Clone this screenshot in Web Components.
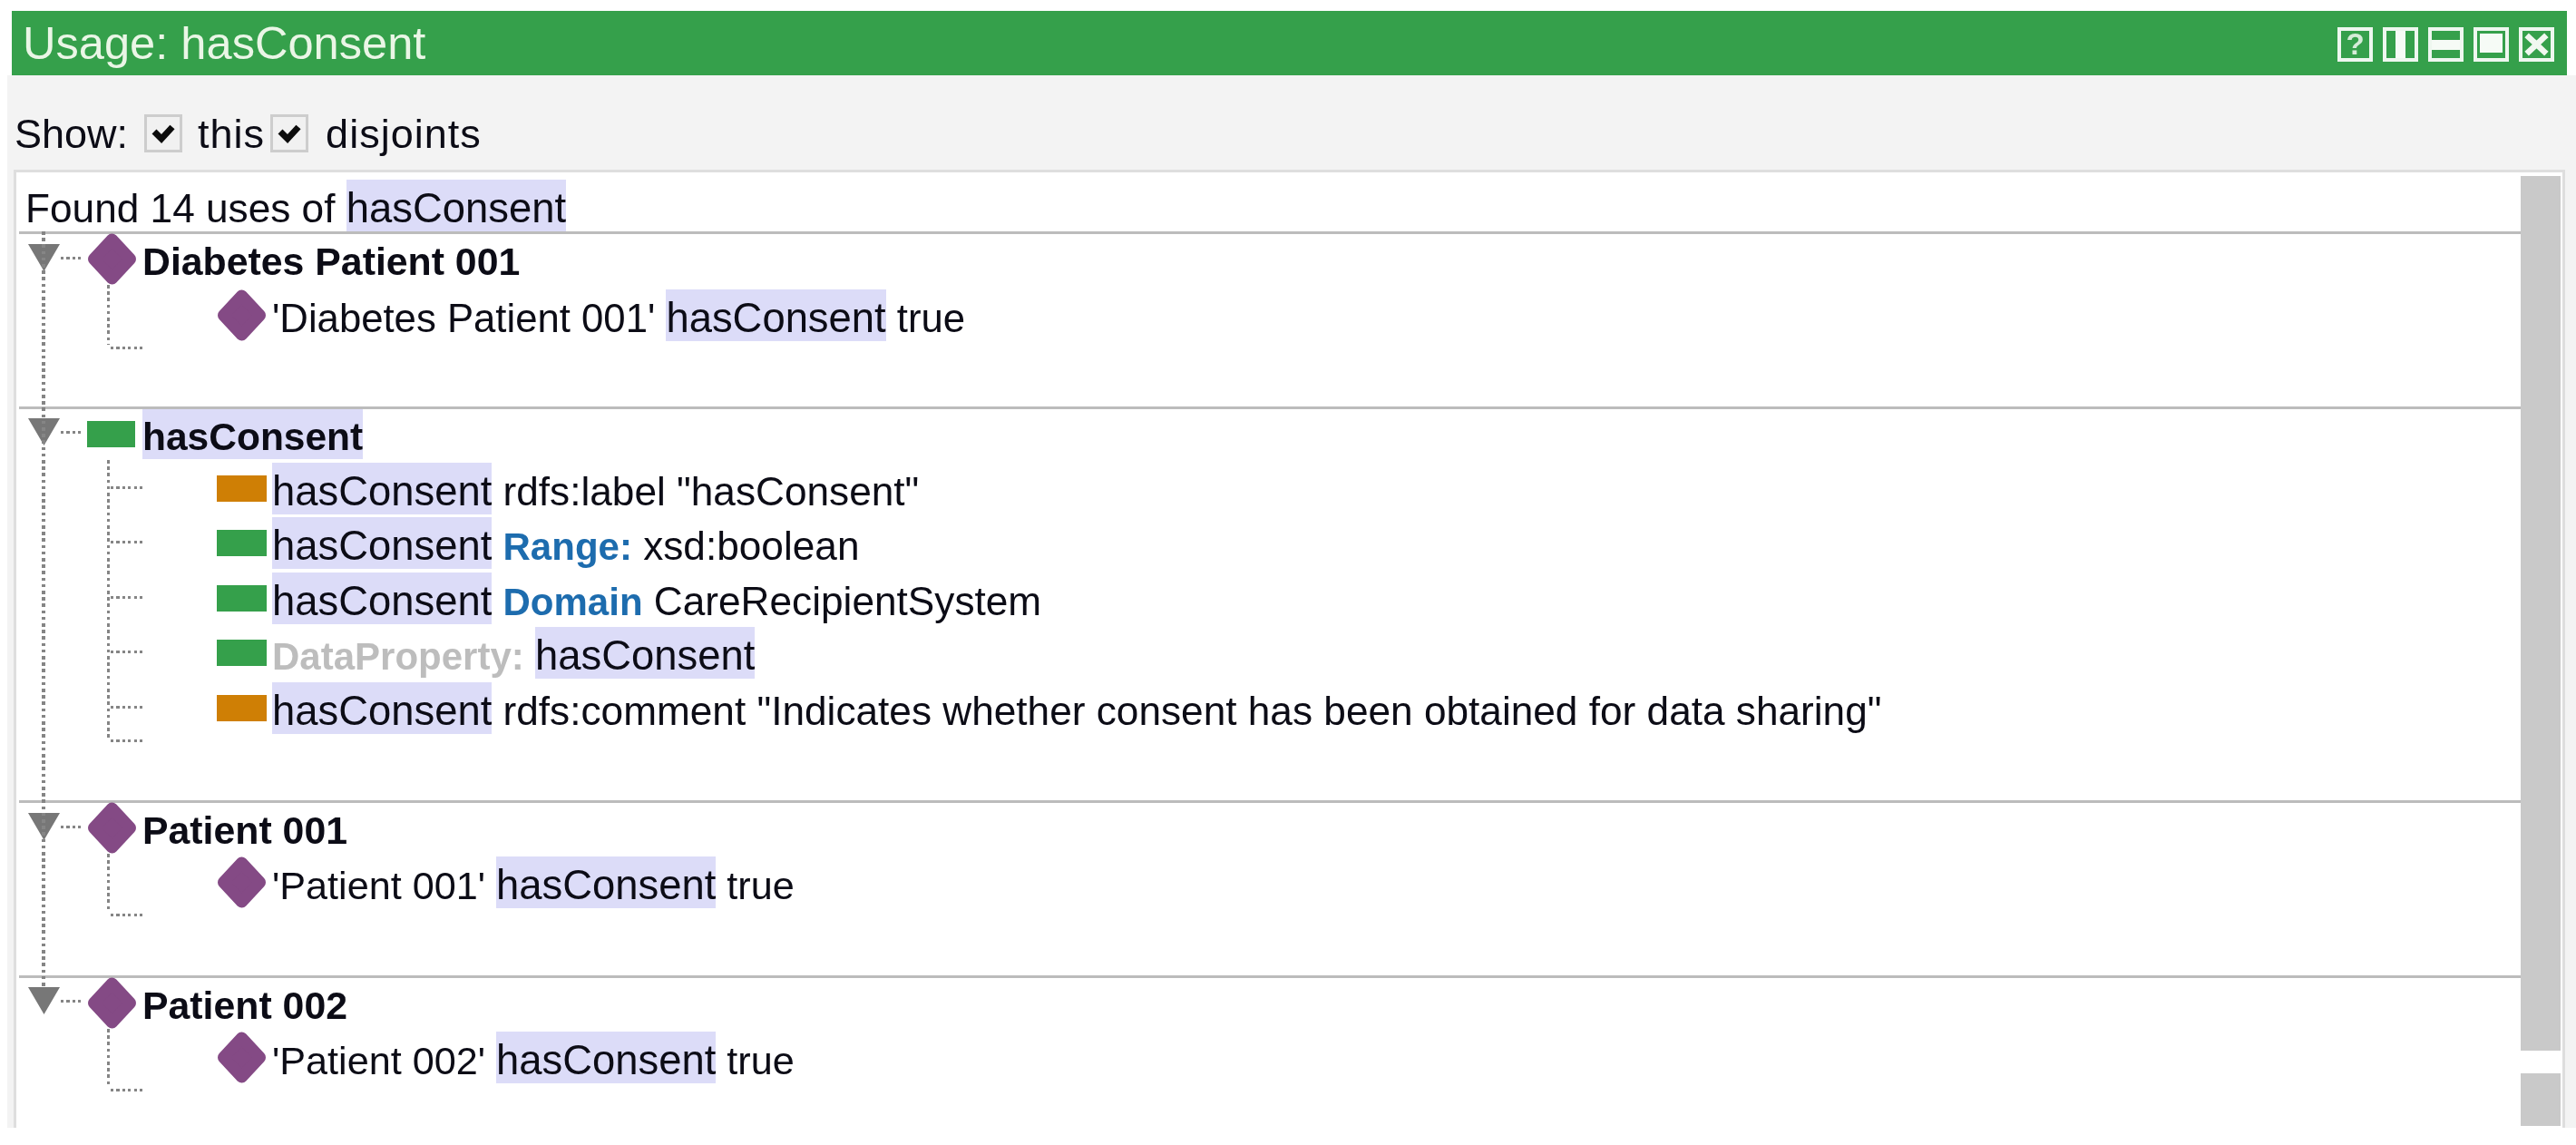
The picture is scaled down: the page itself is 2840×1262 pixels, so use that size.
<!DOCTYPE html>
<html lang="en">
<head>
<meta charset="utf-8">
<title>Usage: hasConsent</title>
<style>
  html, body { margin: 0; padding: 0; background: #fff; }
  body { font-family: "Liberation Sans", Arial, sans-serif; color: #0c0c16; overflow: hidden; }
</style>
</head>
<body>
<usage-view>
  <usage-bar slot="bar" label="Usage: hasConsent">
    <view-button kind="help"></view-button>
    <view-button kind="columns"></view-button>
    <view-button kind="rows"></view-button>
    <view-button kind="max"></view-button>
    <view-button kind="close"></view-button>
  </usage-bar>
  <show-bar slot="show">
    <span>Show:</span>
    <check-box label="this" style="--gap:17px;margin-left:18px"></check-box>
    <check-box label="disjoints" style="--gap:19px;margin-left:6px"></check-box>
  </show-bar>
  <usage-panel slot="panel">
    <found-line>Found 14 uses of <hl-term>hasConsent</hl-term></found-line>

    <usage-group icon="individual" name="Diabetes Patient 001" style="--pt:6px;--pb:71.5px">
      <usage-row icon="individual" style="font-size:43.7px">'Diabetes Patient 001' <hl-term>hasConsent</hl-term> true</usage-row>
    </usage-group>

    <usage-group icon="data" name="hasConsent" mark>
      <usage-row branch icon="annotation"><hl-term>hasConsent</hl-term> rdfs:label "hasConsent"</usage-row>
      <usage-row branch icon="data"><hl-term>hasConsent</hl-term> <key-word>Range:</key-word> xsd:boolean</usage-row>
      <usage-row branch icon="data"><hl-term>hasConsent</hl-term> <key-word>Domain</key-word> CareRecipientSystem</usage-row>
      <usage-row branch icon="data"><key-word tone="grey">DataProperty:</key-word> <hl-term>hasConsent</hl-term></usage-row>
      <usage-row branch icon="annotation"><hl-term>hasConsent</hl-term> rdfs:comment "Indicates whether consent has been obtained for data sharing"</usage-row>
    </usage-group>

    <usage-group icon="individual" name="Patient 001">
      <usage-row icon="individual" style="font-size:43.2px">'Patient 001' <hl-term>hasConsent</hl-term> true</usage-row>
    </usage-group>

    <usage-group icon="individual" name="Patient 002">
      <usage-row icon="individual" style="font-size:43.2px">'Patient 002' <hl-term>hasConsent</hl-term> true</usage-row>
    </usage-group>
  </usage-panel>
</usage-view>

<script>
const DOTS_V = 'repeating-linear-gradient(to bottom,#858585 0 3.6px,transparent 3.6px 7.2px)';
const DOTS_H = 'repeating-linear-gradient(to right,#858585 0 3.2px,transparent 3.2px 6.4px)';
const base = ':host{filter:blur(.5px)}';

function iconMarkup(kind, header) {
  if (kind === 'individual') {
    return `<svg width="55" height="57" viewBox="0 0 55 57" aria-hidden="true"><polygon points="27.5,7 47.5,28.5 27.5,50 7.5,28.5" fill="#844a85" stroke="#844a85" stroke-width="13" stroke-linejoin="round"/></svg>`;
  }
  const colour = kind === 'annotation' ? '#cf7f05' : '#35a04b';
  return `<svg width="55" height="29" viewBox="0 0 55 29" aria-hidden="true"><rect width="${header ? 53 : 55}" height="29" fill="${colour}"/></svg>`;
}

class Simple extends HTMLElement {
  connectedCallback() {
    if (this.shadowRoot) return;
    this.attachShadow({mode: 'open'}).innerHTML = this.render();
  }
}

customElements.define('usage-view', class extends Simple {
  render() { return `<style>
    :host{display:flex;flex-direction:column;width:2840px;height:1262px;padding-top:12px;box-sizing:border-box;font:44.2px/1 "Liberation Sans",Arial,sans-serif}
    .bar{display:block;margin:0 10px 0 13px}
    .body{display:flex;flex-direction:column;margin-left:8px;height:1160px;background:#f3f3f3}
  </style>
  <div class="bar"><slot name="bar"></slot></div>
  <div class="body"><slot name="show"></slot><slot name="panel"></slot></div>`; }
});

customElements.define('usage-bar', class extends Simple {
  render() { return `<style>
    :host{display:flex;align-items:center;justify-content:space-between;height:71px;background:#35a04b;color:#eaf6e6;padding:0 14px 0 12px;box-sizing:border-box;filter:blur(.4px)}
    .t{font-size:50.6px;line-height:71px;white-space:nowrap}
    .b{display:flex;gap:11px;margin-top:3px}
  </style><span class="t">${this.getAttribute('label')}</span><div class="b"><slot></slot></div>`; }
});

customElements.define('view-button', class extends Simple {
  render() {
    const k = this.getAttribute('kind');
    const inner = {
      help: '<span class="q">?</span>',
      columns: '<i style="left:10px;top:0;width:11px;height:100%"></i>',
      rows: '<i style="left:0;top:10px;width:100%;height:11px"></i>',
      max: '<i style="left:3px;top:3px;width:25px;height:21px"></i>',
      close: '<svg width="31" height="30" viewBox="0 0 31 30" aria-hidden="true"><path d="M7 7 L24 23 M24 7 L7 23" stroke="#f1f8f0" stroke-width="6.5" stroke-linecap="square" fill="none"/></svg>'
    }[k];
    return `<style>
      :host{display:block;width:39px;height:38px}
      .box{position:relative;box-sizing:border-box;width:100%;height:100%;border:4px solid #eef7ef;overflow:hidden}
      i{position:absolute;background:#f6fbf6;display:block}
      .q{display:block;text-align:center;font:bold 33px/30px "Liberation Sans",Arial,sans-serif;color:#d5ecd8}
      svg{display:block;position:absolute;left:0;top:0}
    </style><div class="box">${inner}</div>`;
  }
});

customElements.define('show-bar', class extends Simple {
  render() { return `<style>
    :host{display:flex;align-items:center;height:104px;padding:24px 0 0 8px;box-sizing:border-box;font-size:45px;color:#0c0c16;filter:blur(.5px);flex:none}
  </style><slot></slot>`; }
});

customElements.define('check-box', class extends Simple {
  render() { return `<style>
    :host{display:inline-flex;align-items:center;gap:var(--gap,18px)}
    .b{width:42px;height:42px;box-sizing:border-box;border:3px solid #cdcdcd;background:#f1f1f1;display:block;flex:none}
    svg{display:block}
    .l{letter-spacing:1px}
  </style><span class="b"><svg width="36" height="36" viewBox="0 0 36 36" aria-hidden="true"><path d="M8 16 L16 24 L28 11" fill="none" stroke="#0c0c0c" stroke-width="7" stroke-linejoin="miter"/></svg></span><span class="l">${this.getAttribute('label')}</span>`; }
});

customElements.define('usage-panel', class extends Simple {
  render() { return `<style>
    :host{display:flex;flex:1;min-height:0;margin:0 12px 0 7px;background:#fff;border:solid #dedede;border-width:3px 3px 0 3px;overflow:hidden}
    .list{position:relative;flex:1;min-width:0;padding-left:3px;display:flex;flex-direction:column;overflow:hidden}
    .trunk{position:absolute;left:28px;top:65px;width:4px;height:835px;background:${DOTS_V};z-index:2;filter:blur(.4px)}
    .sb{display:flex;flex-direction:column;gap:25px;width:44px;padding:4px 2px 0 0;filter:blur(.4px)}
    .sb i{display:block;background:#c9c9c9;flex:none}
  </style>
  <div class="list"><slot></slot><div class="trunk"></div></div>
  <div class="sb"><i style="height:964px"></i><i style="height:58px"></i></div>`; }
});

customElements.define('found-line', class extends Simple {
  render() { return `<style>
    ${base}
    :host{display:block;flex:none;height:65px;padding:8px 0 0 7px;line-height:57px;white-space:pre;box-sizing:border-box}
  </style><slot></slot>`; }
});

customElements.define('hl-term', class extends Simple {
  render() { return `<style>
    :host{display:inline-block;box-sizing:border-box;height:57px;padding-top:3px;line-height:57px;background:#dcdcf8;font-size:45.4px;vertical-align:baseline}
  </style><slot></slot>`; }
});

customElements.define('key-word', class extends Simple {
  render() {
    const c = this.getAttribute('tone') === 'grey' ? '#bdbdbd' : '#1d6cae';
    return `<style>:host{display:inline;font-weight:bold;font-size:42px;color:${c}}</style><slot></slot>`;
  }
});

customElements.define('usage-group', class extends Simple {
  render() {
    const mark = this.hasAttribute('mark');
    return `<style>
      ${base}
      :host{display:block;flex:none;position:relative;border-top:3px solid #bcbcbc;padding-bottom:var(--pb,73.5px)}
      .head{display:flex;align-items:center;height:55px;padding-left:9px}
      .tw{display:block;width:37px;height:31px;margin-top:-5px;flex:none}
      .d{width:23px;height:3px;background:${DOTS_H};margin:-3px 7px 0 0;flex:none}
      .ic{width:53px;display:flex;justify-content:center;align-items:center;height:55px;flex:none;margin-right:7px}
      .ic svg{flex:none}
      .name{font-weight:bold;font-size:${mark ? 42.5 : 42.8}px;line-height:61px;height:55px;white-space:nowrap;${mark ? 'background:#dcdcf8;' : ''}}
      .rows{position:relative;display:flex;flex-direction:column;gap:3.6px;padding-top:var(--pt,4px)}
      .v{position:absolute;left:97px;top:1px;bottom:-4px;width:3.4px;background:${DOTS_V}}
      .h{position:absolute;left:101px;bottom:-9px;width:38px;height:3px;background:${DOTS_H}}
    </style>
    <div class="head">
      <svg class="tw" viewBox="0 0 37 31" aria-hidden="true"><polygon points="1,1 36,1 18.5,31" fill="#777"/></svg>
      <div class="d"></div>
      <div class="ic">${iconMarkup(this.getAttribute('icon'), true)}</div>
      <span class="name">${this.getAttribute('name')}</span>
    </div>
    <div class="rows"><div class="v"></div><slot></slot><div class="h"></div></div>`;
  }
});

customElements.define('usage-row', class extends Simple {
  render() { return `<style>
    :host{display:flex;align-items:center;position:relative;height:57px;margin-left:218px;white-space:pre;font-size:44.2px}
    :host([branch])::before{content:"";position:absolute;left:-117px;top:26px;width:38px;height:3px;background:${DOTS_H}}
    .ic{width:55px;height:57px;margin-right:6px;display:flex;align-items:center;justify-content:center;flex:none}
    .tx{line-height:57px;display:block;align-self:flex-start;height:57px}
  </style><div class="ic">${iconMarkup(this.getAttribute('icon'), false)}</div><div class="tx"><slot></slot></div>`; }
});
</script>
</body>
</html>
